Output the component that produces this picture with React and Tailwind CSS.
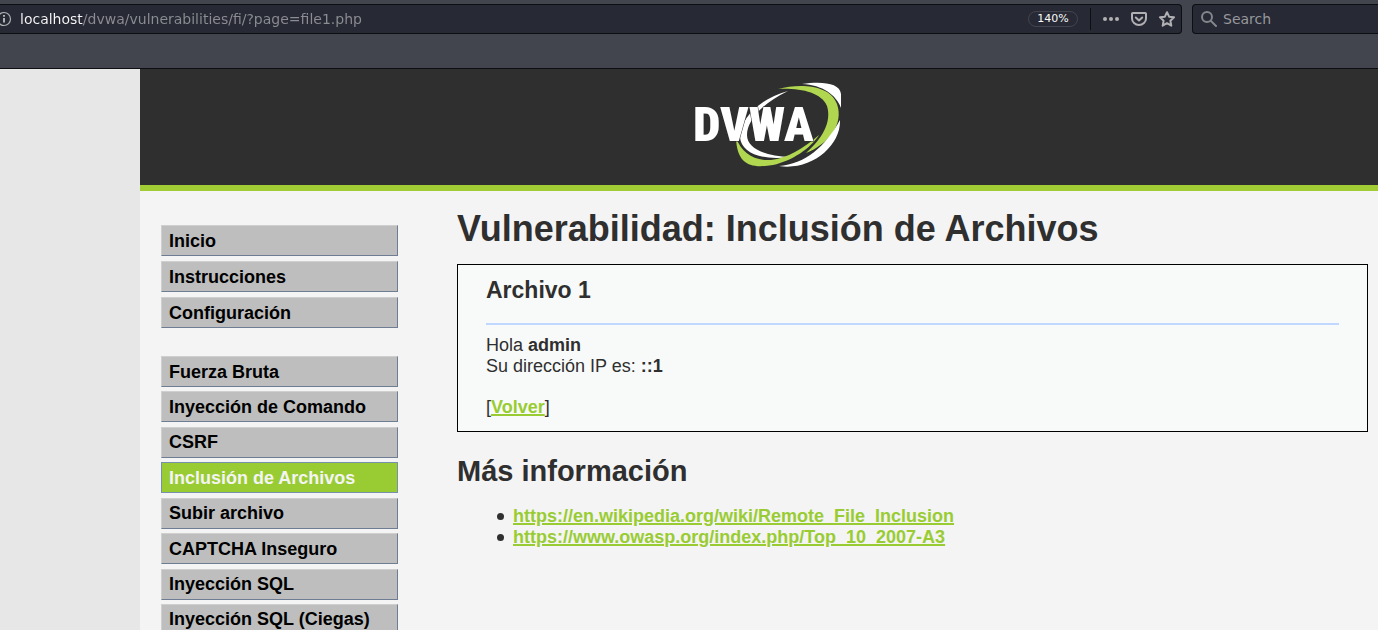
const mainMenu = ['Inicio', 'Instrucciones', 'Configuración'];
const vulnMenu = [
  'Fuerza Bruta',
  'Inyección de Comando',
  'CSRF',
  'Inclusión de Archivos',
  'Subir archivo',
  'CAPTCHA Inseguro',
  'Inyección SQL',
  'Inyección SQL (Ciegas)',
];
const active = 'Inclusión de Archivos';
const links = [
  'https://en.wikipedia.org/wiki/Remote_File_Inclusion',
  'https://www.owasp.org/index.php/Top_10_2007-A3',
];

function MenuItem({ label }) {
  const tone =
    label === active
      ? 'bg-[#99cc33] text-[#f4f4f4] border-[#7790ae]'
      : 'bg-[#bebebe] text-black border-t-[#cfcfcf] border-l-[#cfcfcf] border-r-[#6f7d94] border-b-[#6f7d94]';
  return (
    <li>
      <a href="#" className={`flex h-[31px] items-center border pl-[7px] pt-px font-bold ${tone}`}>
        {label}
      </a>
    </li>
  );
}

function Toolbar() {
  return (
    <div className="flex h-[69px] items-start gap-[10px] overflow-hidden border-b border-[#0c0e12] bg-[#42454d] pt-1 font-['DejaVu_Sans',sans-serif] text-[14px]">
      <div className="-ml-1 flex h-[30px] min-w-0 flex-1 items-center rounded-r-[4px] border border-l-0 border-[#0c0e12] bg-[#272935]">
        <button aria-label="Información del sitio" className="shrink-0">
          <svg width="16" height="16" viewBox="0 0 16 16" fill="none" stroke="#b1b1b3">
            <circle cx="8" cy="8" r="6.5" strokeWidth="1.2" />
            <path d="M8 7v4.5M8 4v1.8" strokeWidth="2" />
          </svg>
        </button>
        <input
          aria-label="Dirección"
          defaultValue="localhost/dvwa/vulnerabilities/fi/?page=file1.php"
          className="ml-2 min-w-0 flex-1 bg-[linear-gradient(to_right,#f9f9fa_63px,#8c8d92_63px)] bg-clip-text text-transparent caret-white outline-none"
        />
        <button className="h-4 w-[50px] shrink-0 rounded-full border border-[#42454d] text-[11px] leading-[14px] text-[#f9f9fa]">
          140%
        </button>
        <span className="ml-3 h-[22px] w-px bg-[#0c0e12]" />
        <button aria-label="Más acciones" className="ml-3 shrink-0">
          <svg width="16" height="16" viewBox="0 0 16 16" fill="#b1b1b3">
            <circle cx="2" cy="8" r="2" />
            <circle cx="8" cy="8" r="2" />
            <circle cx="14" cy="8" r="2" />
          </svg>
        </button>
        <button aria-label="Guardar en Pocket" className="ml-3 shrink-0">
          <svg width="16" height="16" viewBox="0 0 16 16" fill="none" stroke="#b1b1b3" strokeWidth="2" strokeLinecap="round" strokeLinejoin="round">
            <path d="M1.8 2h12.4a.8.8 0 0 1 .8.8V7.5a7 6.5 0 0 1-14 0V2.8A.8.8 0 0 1 1.8 2z" />
            <path d="M4.8 6.5L8 9.5l3.2-3" />
          </svg>
        </button>
        <button aria-label="Añadir a marcadores" className="ml-3 mr-[6px] shrink-0">
          <svg width="16" height="16" viewBox="0 0 16 16" fill="none" stroke="#b1b1b3" strokeWidth="2" strokeLinejoin="round">
            <path d="M8 1.2l2.1 4.5 4.9.6-3.6 3.4.9 5L8 12.2l-4.3 2.5.9-5L1 6.3l4.9-.6z" />
          </svg>
        </button>
      </div>
      <label className="flex h-[30px] w-[186px] shrink-0 items-center rounded-l-[4px] border border-r-0 border-[#0c0e12] bg-[#272935] pl-2">
        <svg width="16" height="16" viewBox="0 0 16 16" fill="none" stroke="#85868b" strokeWidth="2" strokeLinecap="round">
          <circle cx="6" cy="6" r="5" />
          <path d="M10 10l5 5" />
        </svg>
        <input aria-label="Search" placeholder="Search" className="ml-[6px] min-w-0 flex-1 text-[#f9f9fa] outline-none placeholder:text-[#96979b]" />
      </label>
    </div>
  );
}

function Logo() {
  return (
    <svg width="156" height="86" viewBox="-4 0 156 86" role="img" aria-label="DVWA">
      <path d="M108 2C128-1 146 1 147 12v14C142 13 129 3 108 2z" fill="#fff" />
      <path d="M84 7C107 1 136 3 143 22 150 42 135 62 112 71c16-14 26-31 21-47C127 10 106 6 84 7z" fill="#b1d751" />
      <path d="M146 38c1 26-29 51-61 46 26-2 46-19 61-46z" fill="#fff" />
      <path d="M94 9C67 16 46 36 46 55c1 15 20 24 50 20-24-1-43-8-43-22 0-14 14-31 41-44z" fill="#fff" />
      <path d="M42 56c1 26 14 31 37 27 19-4 38-17 46-30-16 14-32 23-48 25-17 1-29-7-35-22z" fill="#b1d751" />
      <text
        x="-1"
        y="59"
        fill="#fff"
        stroke="#2f2f2f"
        strokeWidth="1"
        paintOrder="stroke"
        fontSize="49"
        fontWeight="900"
        fontFamily="'Roboto Condensed',Roboto,sans-serif"
      >
        DVWA
      </text>
    </svg>
  );
}

export default function App() {
  return (
    <div className="flex min-h-screen flex-col bg-[#e7e7e7] font-['Liberation_Sans',Arial,sans-serif] text-[18px] leading-[21px] text-[#2f2f2f]">
      <Toolbar />
      <div className="ml-[140px] flex flex-1 flex-col bg-[#f4f4f4]">
        <header className="flex justify-center border-b-[6px] border-[#a1cc33] bg-[#2f2f2f] pb-[17px] pl-[18px] pt-[13px]">
          <Logo />
        </header>
        <div className="flex">
          <nav className="ml-[21px] mt-[34px] w-[237px] shrink-0">
            <ul className="flex h-[103px] flex-col justify-between">
              {mainMenu.map((label) => (
                <MenuItem key={label} label={label} />
              ))}
            </ul>
            <ul className="mt-7 flex h-[279px] flex-col justify-between">
              {vulnMenu.map((label) => (
                <MenuItem key={label} label={label} />
              ))}
            </ul>
          </nav>
          <main className="ml-[59px] mr-[10px] min-w-0 flex-1 pt-[17px]">
            <h1 className="text-[36px] font-bold leading-[42px]">Vulnerabilidad: Inclusión de Archivos</h1>
            <section className="mt-[14px] border border-black bg-[#f8faf9] px-7 pb-[13px] pt-3">
              <h2 className="text-[23px] font-bold leading-[27px]">Archivo 1</h2>
              <hr className="mb-[10px] mt-[19px] border-t-2 border-[#c0d8ff]" />
              <p>
                Hola <strong>admin</strong>
                <br />
                Su dirección IP es: <strong>::1</strong>
              </p>
              <p className="mt-5">
                [<a href="#" className="font-bold text-[#99cc33] underline decoration-2">Volver</a>]
              </p>
            </section>
            <h2 className="mt-[22px] text-[29px] font-bold leading-[34px]">Más información</h2>
            <ul className="mt-[18px] pl-10">
              {links.map((url) => (
                <li key={url} className="flex items-center gap-[9px] before:size-[7px] before:rounded-full before:bg-[#2f2f2f]">
                  <a href={url} className="font-bold text-[#99cc33] underline decoration-2">
                    {url}
                  </a>
                </li>
              ))}
            </ul>
          </main>
        </div>
      </div>
    </div>
  );
}
